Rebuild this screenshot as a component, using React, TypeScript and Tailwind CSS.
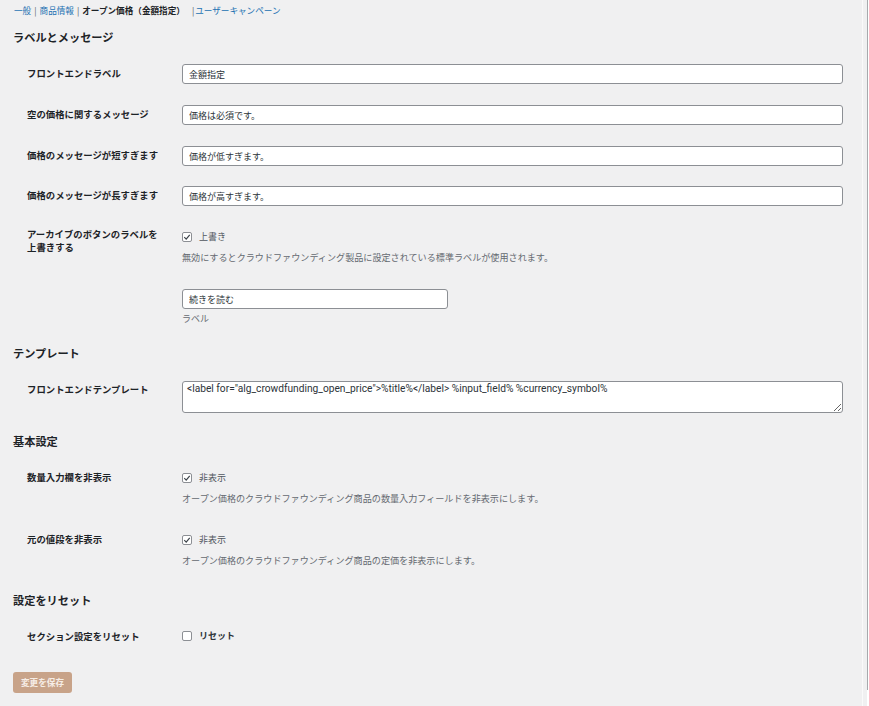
import React from "react";

const JP = { fontFamily: '"Noto Sans CJK JP", "Noto Sans", sans-serif' };

function Check({ checked }: { checked: boolean }) {
  return (
    <span className="inline-flex h-[10px] w-[10px] items-center justify-center rounded-[2px] border border-[#8c8f94] bg-white">
      {checked && (
        <svg viewBox="0 0 10 10" className="h-[8px] w-[8px]">
          <path d="M1.6 5.2 L4 7.6 L8.4 2.2" fill="none" stroke="#3c434a" strokeWidth="1.5" />
        </svg>
      )}
    </span>
  );
}

function TextRow({ label, value, mt }: { label: string; value: string; mt: string }) {
  return (
    <div className={`flex items-start ${mt}`}>
      <div className="ml-[14px] w-[155px] pt-[2px] text-[9.4px] font-bold leading-[14px] text-[#1d2327]">{label}</div>
      <input
        readOnly
        value={value}
        className="h-[20px] w-[661px] rounded-[3px] border border-[#8c8f94] bg-white px-[6px] text-[9px] text-[#2c3338] outline-none"
        style={JP}
      />
    </div>
  );
}

export default function App() {
  return (
    <div className="flex min-h-[706px] w-[869px] bg-white" style={JP}>
      <div className="w-[862px] bg-[#f0f0f1] px-[13px] h-[706px]">
        {/* tabs */}
        <div className="pt-[4px] text-[8.6px] leading-[13px] text-[#50575e] whitespace-nowrap">
          <span className="ml-[1px] text-[#2271b1]">一般</span>
          <span className="mx-[3px]">|</span>
          <span className="text-[#2271b1]">商品情報</span>
          <span className="mx-[3px]">|</span>
          <span className="font-bold text-[#1d2327]">オープン価格（金額指定）</span>
          <span className="ml-[7px] mr-[1px]">|</span>
          <span className="text-[#2271b1]">ユーザーキャンペーン</span>
        </div>

        <h2 className="mt-[12px] text-[11.2px] font-bold leading-[16px] text-[#1d2327]">ラベルとメッセージ</h2>

        <TextRow label="フロントエンドラベル" value="金額指定" mt="mt-[19px]" />
        <TextRow label="空の価格に関するメッセージ" value="価格は必須です。" mt="mt-[21px]" />
        <TextRow label="価格のメッセージが短すぎます" value="価格が低すぎます。" mt="mt-[21px]" />
        <TextRow label="価格のメッセージが長すぎます" value="価格が高すぎます。" mt="mt-[20px]" />

        <div className="mt-[23px] flex items-start">
          <div className="-mt-[1px] ml-[14px] w-[155px] text-[9.4px] font-bold leading-[13px] text-[#1d2327]">
            アーカイブのボタンのラベルを
            <br />
            上書きする
          </div>
          <div className="pt-[1px]">
            <div className="flex h-[14px] items-center gap-[7px] text-[9px] text-[#50575e]">
              <Check checked />
              <span>上書き</span>
            </div>
            <div className="mt-[6px] text-[9.1px] leading-[14px] text-[#646970] whitespace-nowrap">
              無効にするとクラウドファウンディング製品に設定されている標準ラベルが使用されます。
            </div>
            <input
              readOnly
              value="続きを読む"
              className="mt-[25px] block h-[20px] w-[266px] rounded-[3px] border border-[#8c8f94] bg-white px-[6px] text-[9px] text-[#2c3338] outline-none"
              style={JP}
            />
            <div className="mt-[3px] text-[9px] leading-[14px] text-[#646970]">ラベル</div>
          </div>
        </div>

        <h2 className="mt-[19px] text-[11.2px] font-bold leading-[16px] text-[#1d2327]">テンプレート</h2>

        <div className="mt-[20px] flex items-start">
          <div className="ml-[14px] w-[155px] pt-[1px] text-[9.4px] font-bold leading-[14px] text-[#1d2327]">フロントエンドテンプレート</div>
          <textarea
            readOnly
            rows={2}
            defaultValue={'<label for="alg_crowdfunding_open_price">%title%</label> %input_field% %currency_symbol%'}
            className="block h-[32px] w-[661px] resize-y rounded-[3px] border border-[#8c8f94] bg-white px-[4px] py-[1px] text-[10.2px] leading-[12px] text-[#2c3338] outline-none"
            style={{ fontFamily: 'Roboto, "Liberation Sans", sans-serif' }}
          />
        </div>

        <h2 className="mt-[20px] text-[11.2px] font-bold leading-[16px] text-[#1d2327]">基本設定</h2>

        <div className="mt-[22px] flex items-start">
          <div className="ml-[14px] w-[155px] text-[9.4px] font-bold leading-[12px] text-[#1d2327]">数量入力欄を非表示</div>
          <div>
            <div className="flex h-[14px] items-center gap-[7px] text-[9px] text-[#50575e]">
              <Check checked />
              <span>非表示</span>
            </div>
            <div className="mt-[6px] text-[9.1px] leading-[14px] text-[#646970] whitespace-nowrap">
              オープン価格のクラウドファウンディング商品の数量入力フィールドを非表示にします。
            </div>
          </div>
        </div>

        <div className="mt-[28px] flex items-start">
          <div className="ml-[14px] w-[155px] text-[9.4px] font-bold leading-[12px] text-[#1d2327]">元の値段を非表示</div>
          <div>
            <div className="flex h-[14px] items-center gap-[7px] text-[9px] text-[#50575e]">
              <Check checked />
              <span>非表示</span>
            </div>
            <div className="mt-[6px] text-[9.1px] leading-[14px] text-[#646970] whitespace-nowrap">
              オープン価格のクラウドファウンディング商品の定価を非表示にします。
            </div>
          </div>
        </div>

        <h2 className="mt-[25px] text-[11.2px] font-bold leading-[16px] text-[#1d2327]">設定をリセット</h2>

        <div className="mt-[21px] flex items-start">
          <div className="ml-[14px] w-[155px] text-[9.4px] font-bold leading-[14px] text-[#1d2327]">セクション設定をリセット</div>
          <div className="flex h-[14px] items-center gap-[7px] text-[9px] font-bold text-[#2c3338]">
            <Check checked={false} />
            <span>リセット</span>
          </div>
        </div>

        <button className="mt-[29px] flex h-[21px] w-[59px] items-center justify-center rounded-[3px] bg-[#c8a389] text-[8.6px] font-bold text-[#f6ede6]">
          変更を保存
        </button>
      </div>
      <div className="w-[5px] h-[706px] bg-[#f0f0f1] border-l border-[#fafafa]" />
      <div className="w-[1px] h-[690px] bg-[#a7aaad]" />
    </div>
  );
}
